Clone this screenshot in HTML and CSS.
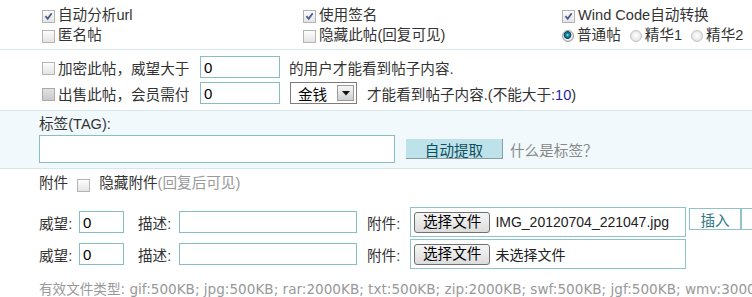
FILE: index.html
```html
<!DOCTYPE html>
<html lang="zh-CN">
<head>
    <meta charset="UTF-8">
    <title>发帖选项</title>
    <link rel="stylesheet" href="styles.css">
</head>
<body>
    <!-- Post options -->
    <div class="opts">
        <label class="opt"><span class="cb"><svg viewBox="0 0 11 11"><path d="M2.5 5.2l2.2 2.6 4-5.6" /></svg></span>自动分析url</label>
        <label class="opt"><span class="cb"><svg viewBox="0 0 11 11"><path d="M2.5 5.2l2.2 2.6 4-5.6" /></svg></span>使用签名</label>
        <label class="opt"><span class="cb"><svg viewBox="0 0 11 11"><path d="M2.5 5.2l2.2 2.6 4-5.6" /></svg></span>Wind Code自动转换</label>
        <label class="opt"><span class="cb"></span>匿名帖</label>
        <label class="opt"><span class="cb"></span>隐藏此帖(回复可见)</label>
        <div class="opt">
            <span class="rd on"></span><span class="rd-text">普通帖</span>
            <span class="rd"></span><span class="rd-text">精华1</span>
            <span class="rd"></span><span>精华2</span>
        </div>
    </div>

    <!-- Permissions -->
    <div class="perm">
        <div class="perm-row">
            <span class="cb"></span>
            <span class="lead">加密此帖，威望大于</span>
            <input class="field w80" type="text" value="0">
            <span class="after">的用户才能看到帖子内容.</span>
        </div>
        <div class="perm-row">
            <span class="cb cb-dim"></span>
            <span class="lead">出售此帖，会员需付</span>
            <input class="field w80" type="text" value="0">
            <span class="sel">
                <span class="sel-val">金钱</span>
                <span class="sel-btn"><svg viewBox="0 0 8 5"><path d="M0 0h8L4 4.5z" /></svg></span>
            </span>
            <span class="after">才能看到帖子内容.(不能大于:<span class="num">10</span>)</span>
        </div>
    </div>

    <!-- Tags -->
    <div class="tagbox">
        <div class="tag-label">标签(TAG):</div>
        <div class="tag-row">
            <input class="field tag-input" type="text">
            <button class="btn-auto">自动提取</button>
            <span class="hint">什么是标签？</span>
        </div>
    </div>

    <!-- Attachments -->
    <div class="attach">
        <div class="attach-head">
            <span>附件</span>
            <span class="cb cb-gap"></span>
            <span>隐藏附件<span class="hint-sm">(回复后可见)</span></span>
        </div>
        <div class="att-row">
            <span class="att-label">威望:</span>
            <input class="field w45" type="text" value="0">
            <span class="att-label desc">描述:</span>
            <input class="field w178" type="text">
            <span class="att-label file">附件:</span>
            <div class="filebox"><span class="filebtn">选择文件</span><span class="fname">IMG_20120704_221047.jpg</span></div>
            <button class="btn-ins">插入</button>
            <button class="btn-ins btn-more"></button>
        </div>
        <div class="att-row">
            <span class="att-label">威望:</span>
            <input class="field w45" type="text" value="0">
            <span class="att-label desc">描述:</span>
            <input class="field w178" type="text">
            <span class="att-label file">附件:</span>
            <div class="filebox"><span class="filebtn">选择文件</span><span class="fname">未选择文件</span></div>
        </div>
        <div class="types">有效文件类型: gif:500KB; jpg:500KB; rar:2000KB; txt:500KB; zip:2000KB; swf:500KB; jgf:500KB; wmv:3000KB</div>
    </div>
</body>
</html>
```

FILE: styles.css
```css
* {
    box-sizing: border-box;
}
body {
    margin: 0;
    font-family: "Liberation Sans", "Noto Sans CJK SC", sans-serif;
    font-size: 14.6px;
    color: #333;
    background: #fff;
    white-space: nowrap;
    overflow: hidden;
}

/* checkboxes / radios */
.cb {
    display: inline-block;
    flex: none;
    width: 13px;
    height: 13px;
    margin-right: 3px;
    border: 1px solid #b4b4b4;
    background: linear-gradient(#fdfdfd, #e4e4e4);
    position: relative;
    top: 1px;
}
.cb svg {
    display: block;
    width: 11px;
    height: 11px;
}
.cb svg path {
    fill: none;
    stroke: #4b5d8c;
    stroke-width: 1.8;
}
.cb-dim {
    background: linear-gradient(#e2e2e2, #c9c9c9);
    border-color: #aaa;
}
.rd {
    display: inline-block;
    flex: none;
    width: 12px;
    height: 12px;
    margin-right: 3px;
    border-radius: 50%;
    border: 1px solid #c2c2c2;
    background: radial-gradient(circle at 50% 45%, #fff, #dadada);
    position: relative;
    top: 1px;
}
.rd.on {
    border-color: #9a9a9a;
    background: radial-gradient(circle at 45% 40%, #9fe3ee 0, #1b8aa3 1.6px, #074a5f 3.6px, #f4f4f4 4.2px, #d8d8d8 6px);
}
.rd-text {
    margin-right: 9px;
}

/* top options */
.opts {
    display: grid;
    grid-template-columns: 261px 259px 1fr;
    grid-auto-rows: 20px;
    padding: 5px 0 4px 42px;
    line-height: 20px;
    border-bottom: 1px solid #d6e5ea;
}
.opt {
    display: flex;
    align-items: center;
}

/* permissions */
.perm {
    padding: 4px 0 4px 42px;
    border-bottom: 1px solid #d6e5ea;
}
.perm-row {
    display: flex;
    align-items: center;
    height: 26px;
}
.perm-row > * {
    flex: none;
}
.lead {
    width: 142px;
}
.field {
    height: 22px;
    padding: 0 3px;
    border: 1px solid #86bec4;
    background: #fff;
    font-family: "Liberation Sans", sans-serif;
    font-size: 15px;
    color: #000;
    outline: none;
}
.w80 { width: 80px; }
.w45 { width: 45px; }
.w178 { width: 178px; }
.after {
    margin-left: 9px;
}
.num {
    color: #1a1fb0;
}
.sel {
    display: flex;
    align-items: center;
    width: 67px;
    height: 22px;
    margin-left: 10px;
    border: 1px solid #7d7d7d;
    background: #fff;
    padding: 0 2px 0 7px;
}
.sel + .after {
    margin-left: 10px;
}
.sel-val {
    flex: 1;
    color: #000;
}
.sel-btn {
    width: 17px;
    height: 16px;
    border: 1px solid #9b9b9b;
    background: linear-gradient(#f7f7f7, #cfcfcf);
    display: flex;
    align-items: center;
    justify-content: center;
}
.sel-btn svg {
    width: 8px;
    height: 5px;
    fill: #111;
}

/* tags */
.tagbox {
    background: #f2f9fc;
    padding: 3px 0 5px 39px;
    border-bottom: 1px solid #d6e5ea;
}
.tag-label {
    line-height: 20px;
    margin-bottom: 1px;
}
.tag-row {
    display: flex;
    align-items: center;
}
.tag-input {
    width: 356px;
    height: 28px;
}
.btn-auto {
    width: 97px;
    height: 20px;
    margin-left: 11px;
    padding: 0;
    border: 0;
    border-right: 1px solid #8a9da2;
    border-bottom: 1px solid #8a9da2;
    background: #bde2ea;
    font-family: inherit;
    font-size: 14.6px;
    color: #0f4e5e;
}
.hint {
    margin-left: 7px;
    color: #888;
}

/* attachments */
.attach {
    padding: 4px 0 0 39px;
}
.attach-head {
    display: flex;
    align-items: center;
    line-height: 20px;
    margin-bottom: 14px;
}
.cb-gap {
    margin: 0 9px;
    top: 2px;
}
.hint-sm {
    color: #999;
}
.att-row {
    display: flex;
    align-items: center;
    height: 30px;
    margin-bottom: 2px;
}
.att-row > * {
    flex: none;
}
.att-label {
    width: 40px;
}
.att-label.desc {
    width: 41px;
    margin-left: 14px;
}
.att-label.file {
    width: 43px;
    margin-left: 10px;
}
.filebox {
    display: flex;
    align-items: center;
    width: 276px;
    height: 30px;
    padding-left: 3px;
    border: 1px solid #8fc3c9;
    color: #222;
    overflow: hidden;
}
.filebtn {
    height: 21px;
    line-height: 19px;
    padding: 0 8px;
    border: 1px solid #707070;
    border-radius: 3px;
    background: linear-gradient(#f6f6f6, #dcdcdc);
    color: #000;
}
.fname {
    margin-left: 5px;
    font-size: 14px;
}
.btn-ins {
    align-self: flex-start;
    margin-top: 1px;
    margin-left: 3px;
    width: 52px;
    height: 22px;
    padding: 0;
    border: 1px solid #8fc3c9;
    background: #fff;
    font-family: inherit;
    font-size: 14.6px;
    color: #2e7587;
}
.btn-more {
    margin-left: 0;
    width: 30px;
}
.types {
    margin-top: 10px;
    line-height: 20px;
    font-family: "DejaVu Sans", "Noto Sans CJK SC", sans-serif;
    font-size: 13.6px;
    color: #999;
}
```
